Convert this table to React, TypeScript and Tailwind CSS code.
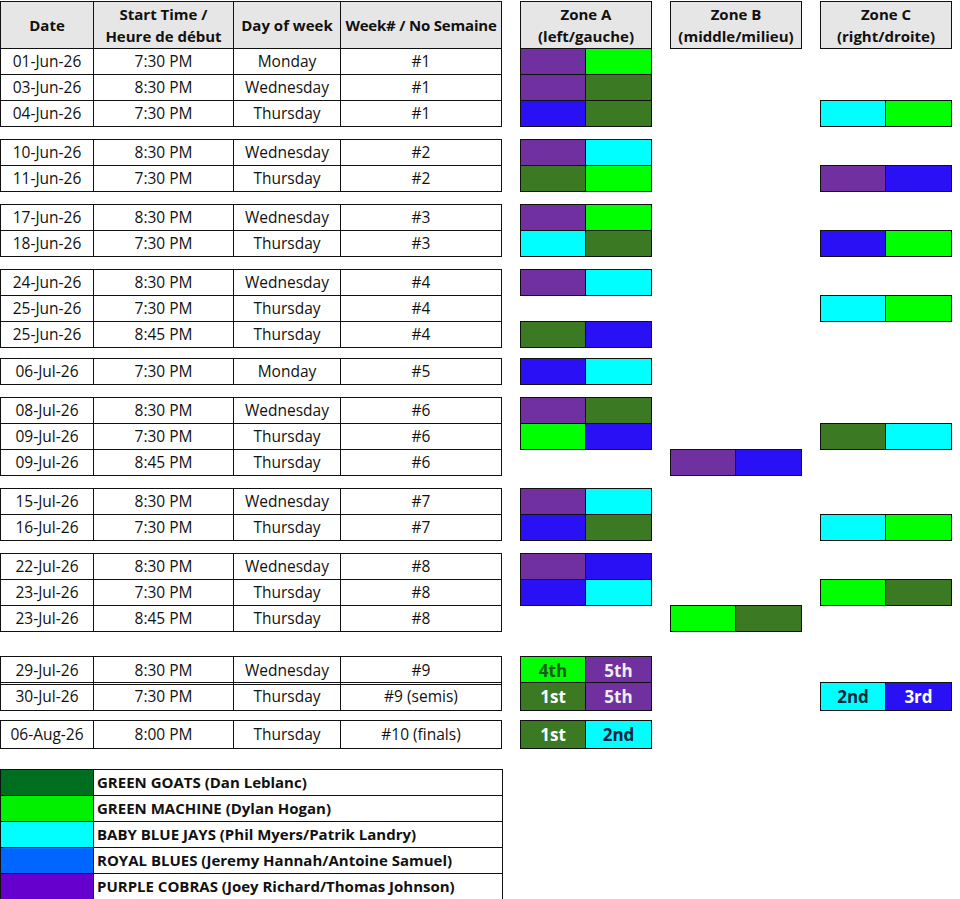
import React from "react";

type C = "p" | "g" | "d" | "b" | "c";

const fill: Record<C, string> = {
  p: "bg-[#7030a0] text-[#eeeeee]",
  g: "bg-[#00ff00] text-[#1d5b1d]",
  d: "bg-[#3b7a23] text-white",
  b: "bg-[#2a10f5] text-white",
  c: "bg-[#00ffff] text-[#10263e]",
};

type Pair = [C, C, string?, string?];

interface Row {
  date: string;
  time: string;
  day: string;
  week: string;
  a?: Pair;
  b?: Pair;
  c?: Pair;
}

const groups: { rows: Row[]; gap: string }[] = [
  {
    gap: "mt-0",
    rows: [
      { date: "01-Jun-26", time: "7:30 PM", day: "Monday", week: "#1", a: ["p", "g"] },
      { date: "03-Jun-26", time: "8:30 PM", day: "Wednesday", week: "#1", a: ["p", "d"] },
      { date: "04-Jun-26", time: "7:30 PM", day: "Thursday", week: "#1", a: ["b", "d"], c: ["c", "g"] },
    ],
  },
  {
    gap: "mt-[12px]",
    rows: [
      { date: "10-Jun-26", time: "8:30 PM", day: "Wednesday", week: "#2", a: ["p", "c"] },
      { date: "11-Jun-26", time: "7:30 PM", day: "Thursday", week: "#2", a: ["d", "g"], c: ["p", "b"] },
    ],
  },
  {
    gap: "mt-[12px]",
    rows: [
      { date: "17-Jun-26", time: "8:30 PM", day: "Wednesday", week: "#3", a: ["p", "g"] },
      { date: "18-Jun-26", time: "7:30 PM", day: "Thursday", week: "#3", a: ["c", "d"], c: ["b", "g"] },
    ],
  },
  {
    gap: "mt-[12px]",
    rows: [
      { date: "24-Jun-26", time: "8:30 PM", day: "Wednesday", week: "#4", a: ["p", "c"] },
      { date: "25-Jun-26", time: "7:30 PM", day: "Thursday", week: "#4", c: ["c", "g"] },
      { date: "25-Jun-26", time: "8:45 PM", day: "Thursday", week: "#4", a: ["d", "b"] },
    ],
  },
  {
    gap: "mt-[10px]",
    rows: [{ date: "06-Jul-26", time: "7:30 PM", day: "Monday", week: "#5", a: ["b", "c"] }],
  },
  {
    gap: "mt-[12px]",
    rows: [
      { date: "08-Jul-26", time: "8:30 PM", day: "Wednesday", week: "#6", a: ["p", "d"] },
      { date: "09-Jul-26", time: "7:30 PM", day: "Thursday", week: "#6", a: ["g", "b"], c: ["d", "c"] },
      { date: "09-Jul-26", time: "8:45 PM", day: "Thursday", week: "#6", b: ["p", "b"] },
    ],
  },
  {
    gap: "mt-[12px]",
    rows: [
      { date: "15-Jul-26", time: "8:30 PM", day: "Wednesday", week: "#7", a: ["p", "c"] },
      { date: "16-Jul-26", time: "7:30 PM", day: "Thursday", week: "#7", a: ["b", "d"], c: ["c", "g"] },
    ],
  },
  {
    gap: "mt-[12px]",
    rows: [
      { date: "22-Jul-26", time: "8:30 PM", day: "Wednesday", week: "#8", a: ["p", "b"] },
      { date: "23-Jul-26", time: "7:30 PM", day: "Thursday", week: "#8", a: ["b", "c"], c: ["g", "d"] },
      { date: "23-Jul-26", time: "8:45 PM", day: "Thursday", week: "#8", b: ["g", "d"] },
    ],
  },
  {
    gap: "mt-[24px]",
    rows: [
      { date: "29-Jul-26", time: "8:30 PM", day: "Wednesday", week: "#9", a: ["g", "p", "4th", "5th"] },
      { date: "30-Jul-26", time: "7:30 PM", day: "Thursday", week: "#9 (semis)", a: ["d", "p", "1st", "5th"], c: ["c", "b", "2nd", "3rd"] },
    ],
  },
  {
    gap: "mt-[11px]",
    rows: [{ date: "06-Aug-26", time: "8:00 PM", day: "Thursday", week: "#10 (finals)", a: ["d", "c", "1st", "2nd"] }],
  },
];

const legend = [
  { color: "bg-[#006e1f]", label: "GREEN GOATS (Dan Leblanc)" },
  { color: "bg-[#00f000]", label: "GREEN MACHINE (Dylan Hogan)" },
  { color: "bg-[#00ffff]", label: "BABY BLUE JAYS (Phil Myers/Patrik Landry)" },
  { color: "bg-[#0066ff]", label: "ROYAL BLUES (Jeremy Hannah/Antoine Samuel)" },
  { color: "bg-[#6600cc]", label: "PURPLE COBRAS (Joey Richard/Thomas Johnson)" },
];

const gridCols =
  "grid grid-cols-[94px_140px_107px_161px_18px_66px_66px_18px_66px_66px_18px_66px_66px]";
const cell = "border border-[#111] flex items-center justify-center";

function Zone({ pair }: { pair?: Pair }) {
  if (!pair) return <><div /><div /></>;
  const [l, r, lt, rt] = pair;
  return (
    <>
      <div className={`${cell} ${fill[l]} text-[17px] font-bold pt-px`}>{lt}</div>
      <div className={`${cell} -ml-px ${fill[r]} text-[17px] font-bold pt-px`}>{rt}</div>
    </>
  );
}

export default function App() {
  return (
    <div className="w-[960px] min-h-[899px] bg-white text-[#111] font-['Open_Sans',sans-serif] text-[15.5px] pt-px overflow-hidden">
      {/* header */}
      <div className={`${gridCols} h-[48px] font-bold leading-[22px] text-[15px]`}>
        <div className={`${cell} bg-[#e7e6e6]`}>Date</div>
        <div className={`${cell} -ml-px bg-[#e7e6e6] flex-col`}>
          <span>Start Time /</span>
          <span>Heure de début</span>
        </div>
        <div className={`${cell} -ml-px bg-[#e7e6e6]`}>Day of week</div>
        <div className={`${cell} -ml-px bg-[#e7e6e6] tracking-[-0.2px]`}>Week# / No Semaine</div>
        <div />
        <div className={`${cell} col-span-2 bg-[#e7e6e6] flex-col`}>
          <span>Zone A</span>
          <span>(left/gauche)</span>
        </div>
        <div />
        <div className={`${cell} col-span-2 bg-[#e7e6e6] flex-col`}>
          <span>Zone B</span>
          <span>(middle/milieu)</span>
        </div>
        <div />
        <div className={`${cell} col-span-2 bg-[#e7e6e6] flex-col`}>
          <span>Zone C</span>
          <span>(right/droite)</span>
        </div>
      </div>

      {groups.map((g, gi) => (
        <div key={gi} className={gi === 0 ? "" : g.gap}>
          {g.rows.map((r, ri) => (
            <div key={ri} className={`${gridCols} h-[27px] ${gi === 0 || ri > 0 ? "-mt-px" : ""}`}>
              <div className={`${cell} pt-px`}>{r.date}</div>
              <div className={`${cell} -ml-px pt-px`}>{r.time}</div>
              <div className={`${cell} -ml-px pt-px`}>{r.day}</div>
              <div className={`${cell} -ml-px pt-px`}>{r.week}</div>
              <div />
              <Zone pair={r.a} />
              <div />
              <Zone pair={r.b} />
              <div />
              <Zone pair={r.c} />
            </div>
          ))}
        </div>
      ))}

      {/* legend */}
      <div className="mt-[22px] w-[503px]">
        {legend.map((l, i) => (
          <div key={i} className={`grid grid-cols-[94px_409px] h-[27px] ${i > 0 ? "-mt-px" : ""}`}>
            <div className={`border border-[#111] ${l.color}`} />
            <div className="border border-[#111] -ml-px flex items-center pl-[3px] font-bold text-[15px]">
              {l.label}
            </div>
          </div>
        ))}
      </div>
    </div>
  );
}
